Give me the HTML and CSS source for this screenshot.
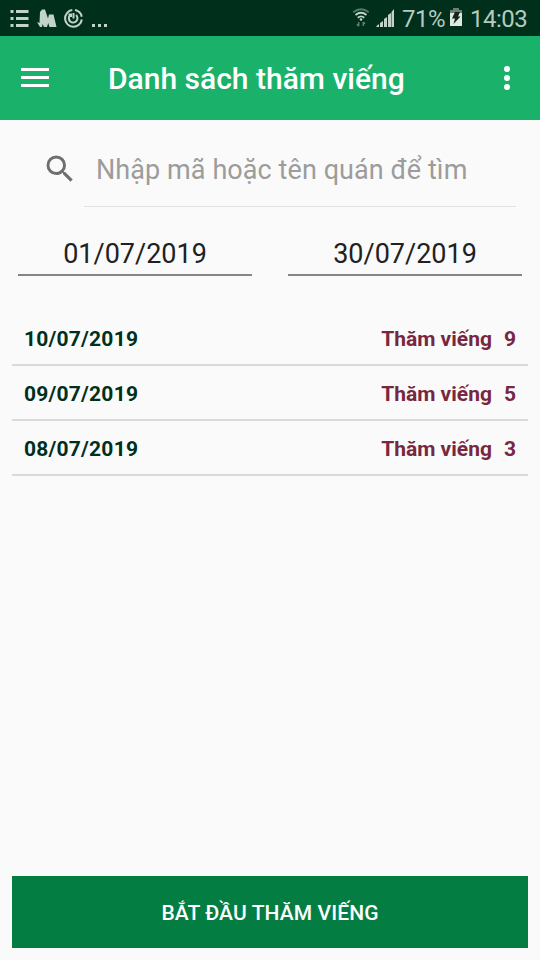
FILE: index.html
```html
<!DOCTYPE html>
<html lang="vi">
<head>
<meta charset="utf-8">
<meta name="viewport" content="width=device-width, initial-scale=1">
<title>Danh sách thăm viếng</title>
<link rel="stylesheet" href="styles.css">
</head>
<body>
<div class="statusbar">
  <svg class="status-left" width="110" height="36" viewBox="0 0 110 36" fill="#c2d3c9">
    <path d="M10.500 10h3v3h-3zM16 10h12.500v3H16zM10.500 17h3v3h-3zM16 17h12.500v3H16zM10.500 24h3v3h-3zM16 24h12.500v3H16z"/>
    <path d="M37 22l2.500 1L40 12l2-2.500h3l3 9 1-4h4.500L56.500 27H49.500l-1.300-4-1.200 4h-3l-1.500-3-.5 3H40z"/>
    <g fill="none" stroke="#c2d3c9" stroke-width="2">
      <path d="M75 10.100a8.400 8.400 0 0 1 6.700 6.600M81.800 19.500a8.400 8.400 0 1 1-9.500-9.400"/>
      <path d="M76 15a4.300 4.300 0 1 1-6 .3M73.500 13v5.500M68.500 14.500h2.500v2.500"/>
    </g>
    <path d="M92 24h3v3h-3zM98 24h3v3h-3zM104 24h3v3h-3z"/>
  </svg>
  <div class="status-right">
    <svg class="wifi" width="18" height="20" viewBox="0 0 18 20" fill="none" stroke="#c2d3c9" stroke-width="1.800">
      <path opacity=".45" d="M1.300 4.300Q9-1.800 16.700 4.300"/>
      <path d="M3.500 7Q9 2.600 14.500 7M5.700 9.700Q9 7 12.300 9.700"/>
      <circle cx="9" cy="11.500" r="1.300" fill="#c2d3c9" stroke="none"/>
      <path opacity=".5" stroke-width="1.500" d="M6.700 14v4M5 16.300l1.700 1.900M11.300 18v-4M13 15.800l-1.700-1.900"/>
    </svg>
    <svg class="signal" width="19" height="19" viewBox="0 0 19 19" fill="#c2d3c9">
      <path d="M0 18h3v-2.500H2zM4 18h3v-6l-3 2zM8 18h3V8l-3 2zM12 18h3V4l-3 2zM15.500 18H18V0l-2.500 3z"/>
    </svg>
    <span class="percent">71%</span>
    <svg class="battery" width="12" height="19" viewBox="0 0 12 19">
      <path fill="#6e8076" d="M3 0h6v2h3v4H0V2h3z"/>
      <path fill="#dfe9e3" d="M0 5h12v13H0z"/>
      <path fill="#14231b" d="M5 4h5L8 8.500h2.500L3.500 16l1.500-5.500H2z"/>
    </svg>
    <span class="clock">14:03</span>
  </div>
</div>
<header class="toolbar">
  <svg class="menu" width="28" height="20" viewBox="0 0 28 20" fill="#fff"><path d="M0 0h28v3H0zM0 8h28v3H0zM0 16h28v3H0z"/></svg>
  <h1 class="title">Danh sách thăm viếng</h1>
  <svg class="more" width="6" height="24" viewBox="0 0 6 24" fill="#fff"><circle cx="3" cy="3" r="3"/><circle cx="3" cy="12" r="3"/><circle cx="3" cy="21" r="3"/></svg>
</header>
<main class="content">
  <div class="search">
    <svg class="search-icon" width="36" height="36" viewBox="0 0 24 24" fill="#6f6f6f"><path d="M15.500 14h-.79l-.28-.27A6.471 6.471 0 0 0 16 9.500 6.500 6.500 0 1 0 9.500 16c1.610 0 3.090-.59 4.230-1.570l.27.28v.79l5 4.990L20.490 19l-4.990-5zm-6 0C7.010 14 5 11.990 5 9.500S7.010 5 9.500 5 14 7.010 14 9.500 11.990 14 9.500 14z"/></svg>
    <div class="search-field">Nhập mã hoặc tên quán để tìm</div>
  </div>
  <div class="dates">
    <div class="date">01/07/2019</div>
    <div class="date">30/07/2019</div>
  </div>
  <ul class="visits">
    <li class="visit"><span class="day">10/07/2019</span><span class="label">Thăm viếng</span><span class="count">9</span></li>
    <li class="visit"><span class="day">09/07/2019</span><span class="label">Thăm viếng</span><span class="count">5</span></li>
    <li class="visit"><span class="day">08/07/2019</span><span class="label">Thăm viếng</span><span class="count">3</span></li>
  </ul>
</main>
<button class="start" type="button">BẮT ĐẦU THĂM VIẾNG</button>
</body>
</html>
```
FILE: styles.css
```css
* { box-sizing: border-box; }
body {
  margin: 0;
  height: 960px;
  display: flex;
  flex-direction: column;
  background: #fafafa;
  font-family: Roboto, "Liberation Sans", sans-serif;
  overflow: hidden;
}
svg { display: block; flex: none; }
.statusbar {
  height: 36px;
  flex: none;
  display: flex;
  justify-content: space-between;
  background: #00301c;
  color: #b5cbbf;
}
.status-right {
  display: flex;
  align-items: flex-start;
  padding-right: 12px;
  font-size: 24px;
  line-height: 38px;
  letter-spacing: -0.5px;
  white-space: nowrap;
}
.wifi { margin: 8px 6px 0 0; }
.signal { margin: 9px 7px 0 0; }
.percent { width: 43px; margin-right: 5px; }
.battery { margin: 8px 8px 0 0; }
.clock { width: 58px; }
.toolbar {
  height: 84px;
  flex: none;
  display: flex;
  align-items: center;
  padding: 0 30px 0 21px;
  background: #1ab26b;
}
.menu { margin-right: 59px; }
.title {
  flex: 1;
  margin: 0;
  padding-top: 2px;
  color: #fff;
  font-size: 30px;
  line-height: 36px;
  font-weight: 500;
  white-space: nowrap;
}
.content { flex: 1; }
.search {
  display: flex;
  align-items: flex-start;
  padding: 12px 24px 0 42px;
}
.search-icon { margin: 19px 6px 0 0; }
.search-field {
  flex: 1;
  height: 75px;
  padding-left: 12px;
  border-bottom: 1px solid #e2e2e2;
  color: #9c9c9c;
  font-size: 27px;
  line-height: 76px;
  letter-spacing: 0.08px;
  white-space: nowrap;
}
.dates {
  display: flex;
  gap: 36px;
  padding: 29px 18px 0;
}
.date {
  flex: 1;
  height: 40px;
  border-bottom: 2px solid #858585;
  color: #212121;
  font-size: 27px;
  line-height: 36px;
  text-align: center;
}
.visits {
  margin: 35px 12px 0;
  padding: 0;
  list-style: none;
}
.visit {
  height: 55px;
  display: flex;
  padding: 0 12px;
  border-bottom: 2px solid #dadada;
  color: #772740;
  font-size: 21px;
  line-height: 57px;
  font-weight: 700;
  white-space: nowrap;
}
.day { flex: 1; color: #00301c; letter-spacing: 0.22px; }
.count { margin-left: 12px; }
.start {
  flex: none;
  height: 72px;
  margin: 0 12px 12px;
  padding: 1px 0 0;
  border: 0;
  background: #047d43;
  color: #fff;
  font: 500 21px/28px Roboto, "Liberation Sans", sans-serif;
  letter-spacing: 0.1px;
}
```
